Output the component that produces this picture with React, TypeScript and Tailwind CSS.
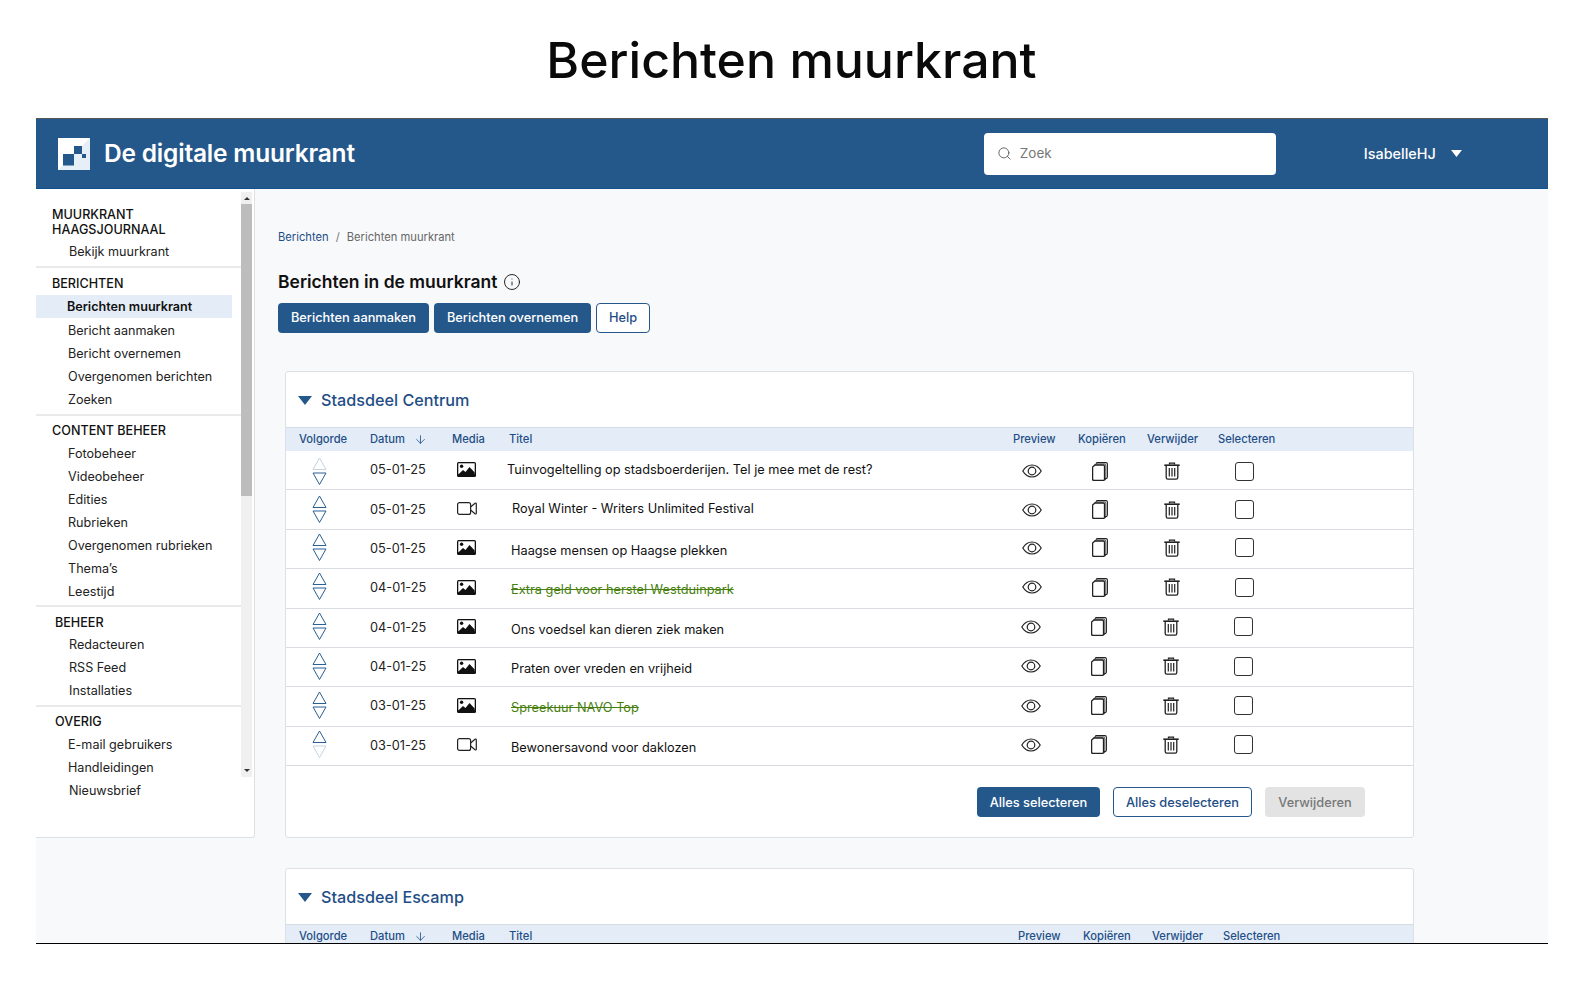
import { Search, ArrowDown, Info } from "lucide-react";

type Row = {
  date: string;
  title: string;
  media: "image" | "video";
  titleClass: string;
  arrowClass: string;
  iconClass: string;
  removed?: boolean;
  upFaded?: boolean;
  downFaded?: boolean;
};

const rows: Row[] = [
  { date: "05-01-25", title: "Tuinvogeltelling op stadsboerderijen. Tel je mee met de rest?", media: "image", titleClass: "pb-[2px]", arrowClass: "pt-[2px]", iconClass: "pt-[2px]", upFaded: true },
  { date: "05-01-25", title: "Royal Winter - Writers Unlimited Festival", media: "video", titleClass: "pl-[5px] pb-[3px]", arrowClass: "", iconClass: "" },
  { date: "05-01-25", title: "Haagse mensen op Haagse plekken", media: "image", titleClass: "pl-[4px] pt-[3px]", arrowClass: "pb-[3px]", iconClass: "pb-[2px]" },
  { date: "04-01-25", title: "Extra geld voor herstel Westduinpark", media: "image", titleClass: "pl-[4px] pt-[3px]", arrowClass: "pb-[3px]", iconClass: "pb-[2px]", removed: true },
  { date: "04-01-25", title: "Ons voedsel kan dieren ziek maken", media: "image", titleClass: "pl-[4px] pt-[3px]", arrowClass: "pb-[2px]", iconClass: "pb-[2px] -ml-[1px]" },
  { date: "04-01-25", title: "Praten over vreden en vrijheid", media: "image", titleClass: "pl-[4px] pt-[3px]", arrowClass: "pb-[2px]", iconClass: "pb-[2px] -ml-[1px]" },
  { date: "03-01-25", title: "Spreekuur NAVO Top", media: "image", titleClass: "pl-[4px] pt-[3px]", arrowClass: "pb-[2px]", iconClass: "pb-[2px] -ml-[1px]", removed: true },
  { date: "03-01-25", title: "Bewonersavond voor daklozen", media: "video", titleClass: "pl-[4px] pt-[3px]", arrowClass: "pb-[2px]", iconClass: "pb-[2px] -ml-[1px]", downFaded: true },
];

const gridCols = "grid grid-cols-[70px_83px_55px_506px_65px_69px_71px_1fr]";

function Logo() {
  return (
    <svg width="32" height="32" viewBox="0 0 32 32">
      <rect width="32" height="32" fill="#fff" />
      <path d="M32 32H0L32 0z" fill="#dce8f5" opacity="0.7" />
      <rect x="5" y="16" width="11" height="11.5" fill="#25588a" />
      <rect x="16" y="8" width="8" height="8" fill="#25588a" />
      <rect x="24" y="16" width="4" height="4" fill="#25588a" />
    </svg>
  );
}

function Triangle({ className }: { className: string }) {
  return (
    <svg className={className} viewBox="0 0 14 9">
      <path d="M0 0h14L7 9z" fill="currentColor" />
    </svg>
  );
}

function OrderArrows({ upFaded, downFaded }: { upFaded?: boolean; downFaded?: boolean }) {
  return (
    <svg width="15" height="29" viewBox="0 0 15 29" fill="none" strokeWidth="1">
      <path d="M7.5 1 1 12.5h13z" stroke={upFaded ? "#c5d3e2" : "#2b5f94"} />
      <path d="M1 16h13L7.5 27.5z" stroke={downFaded ? "#c5d3e2" : "#2b5f94"} />
    </svg>
  );
}

function ImageIcon() {
  return (
    <svg width="19" height="15" viewBox="0 0 19 15">
      <rect x="0" y="0" width="19" height="15" rx="1.5" fill="#111" />
      <rect x="1.3" y="1.3" width="16.4" height="11" fill="#fff" />
      <circle cx="4.6" cy="4.2" r="1.7" fill="#111" />
      <path d="M1.3 12.5 6 8l2.5 2 4-5 5.2 5.5V13H1.3z" fill="#111" />
    </svg>
  );
}

function VideoIcon() {
  return (
    <svg width="20" height="13" viewBox="0 0 20 13" fill="none" stroke="#222" strokeWidth="1.2">
      <rect x="0.6" y="0.6" width="13" height="11.8" rx="2" />
      <path d="M13.6 5 18 1.2c.6-.4 1.3-.2 1.3.6v9.4c0 .8-.7 1-1.3.6L13.6 8" />
    </svg>
  );
}

function EyeIcon() {
  return (
    <svg width="20" height="14" viewBox="0 0 20 14" fill="none" stroke="#222" strokeWidth="1.2">
      <path d="M.8 7C3.2 3 6.2 1 10 1s6.8 2 9.2 6c-2.4 4-5.4 6-9.2 6S3.2 11 .8 7z" />
      <circle cx="10" cy="7" r="3.8" />
    </svg>
  );
}

function CopyIcon() {
  return (
    <svg width="16" height="19" viewBox="0 0 16 19" fill="none" stroke="#222" strokeWidth="1.1">
      <path d="M4 1.6 5 .6h9c.8 0 1.4.6 1.4 1.4v13c0 1-.6 1.6-1.4 1.6h-1.4" />
      <path d="M2.6 3.2 4 2h8.4c.8 0 1.4.6 1.4 1.4v13c0 .9-.6 1.5-1.4 1.5" strokeOpacity="0.7" />
      <path d="M.6 5 3 3h8.2c.7 0 1.3.6 1.3 1.3v12.9c0 .7-.6 1.2-1.3 1.2H2c-.8 0-1.4-.6-1.4-1.3z" strokeWidth="1.3" />
    </svg>
  );
}

function TrashIcon() {
  return (
    <svg width="16" height="18" viewBox="0 0 16 18" fill="none" stroke="#222">
      <path d="M.3 3.2h15.4" strokeWidth="1.6" />
      <path d="M5.5 2.6V1.2h5v1.4" strokeWidth="1.3" />
      <path d="M2.2 4v11.4c0 1 .7 1.8 1.7 1.8h8.2c1 0 1.7-.8 1.7-1.8V4" strokeWidth="1.3" />
      <path d="M5.3 6v8.6M8 6v8.6M10.7 6v8.6" strokeWidth="1.2" />
    </svg>
  );
}

function TableHeader({ wide }: { wide?: boolean }) {
  return (
    <div className={`${gridCols} h-[24px] shrink-0 items-center border-t border-[#d5dce3] bg-[#e4edf7] pl-[13px] text-[11.2px] font-medium text-[#1f4e86]`}>
      <span>Volgorde</span>
      <span className="flex items-center pl-[1px]">
        Datum
        <ArrowDown size={13} strokeWidth={1.5} className="ml-[9px]" />
      </span>
      <span>Media</span>
      <span className="pl-[2px]">Titel</span>
      <span className={wide ? "pl-[5px]" : ""}>Preview</span>
      <span className={wide ? "pl-[5px]" : ""}>Kopiëren</span>
      <span className={wide ? "pl-[5px]" : ""}>Verwijder</span>
      <span className={wide ? "pl-[5px]" : ""}>Selecteren</span>
    </div>
  );
}

function TableRow({ row }: { row: Row }) {
  return (
    <div className={`${gridCols} h-[39.4px] items-center border-b-[1.5px] border-[#d9dde2] pl-[13px] text-[12.75px] text-[#111]`}>
      <div className={`flex pl-[13px] ${row.arrowClass}`}>
        <OrderArrows upFaded={row.upFaded} downFaded={row.downFaded} />
      </div>
      <span className="pb-[1px] pl-[1px] text-[#222]">{row.date}</span>
      <div className="flex pb-[2px] pl-[5px]">{row.media === "image" ? <ImageIcon /> : <VideoIcon />}</div>
      <span className={`${row.titleClass} ${row.removed ? "text-[#47800f] line-through" : ""}`}>{row.title}</span>
      <div className={`flex pl-[9px] ${row.iconClass}`}>
        <EyeIcon />
      </div>
      <div className={`flex pl-[14px] ${row.iconClass}`}>
        <CopyIcon />
      </div>
      <div className={`flex pl-[17px] ${row.iconClass}`}>
        <TrashIcon />
      </div>
      <div className={`flex pl-[17px] ${row.iconClass}`}>
        <span className="h-[19px] w-[19px] rounded-[3px] border-[1.5px] border-[#333]" />
      </div>
    </div>
  );
}

function CardTitle({ title }: { title: string }) {
  return (
    <div className="flex h-[55px] shrink-0 items-center gap-[9px] pt-[2px] pl-[12px]">
      <Triangle className="h-[9px] w-[14px] text-[#25588a]" />
      <span className="text-[16.2px] font-medium text-[#1f4e86]">{title}</span>
    </div>
  );
}

function SideHead({ children, className = "" }: { children: React.ReactNode; className?: string }) {
  return <div className={`text-[12.6px] leading-[15px] font-medium text-[#111] ${className}`}>{children}</div>;
}

function SideItem({ children, className = "" }: { children: React.ReactNode; className?: string }) {
  return <div className={`flex h-[23px] items-center pt-[2px] text-[12.6px] text-[#222] ${className}`}>{children}</div>;
}

function Sidebar() {
  return (
    <aside className="flex h-[649px] w-[219px] shrink-0 rounded-br-[3px] border-r border-b border-[#dde1e5] bg-white">
      <nav className="flex w-[205px] flex-col pt-[18px]">
        <div className="border-b-2 border-[#e8eaec] pb-[3px]">
          <SideHead className="pl-[16px]">
            MUURKRANT
            <br />
            HAAGSJOURNAAL
          </SideHead>
          <SideItem className="mt-[3px] pl-[33px]">Bekijk muurkrant</SideItem>
        </div>
        <div className="border-b-2 border-[#e8eaec] pt-[8px] pb-[3px]">
          <SideHead className="pl-[16px]">BERICHTEN</SideHead>
          <div className="mt-[4px] flex h-[23px] w-[196px] items-center bg-[#e4edf7] pt-[2px] pl-[31px] text-[12.6px] font-semibold text-[#111]">
            Berichten muurkrant
          </div>
          <SideItem className="mt-[1px] pl-[32px]">Bericht aanmaken</SideItem>
          <SideItem className="pl-[32px]">Bericht overnemen</SideItem>
          <SideItem className="pl-[32px]">Overgenomen berichten</SideItem>
          <SideItem className="pl-[32px]">Zoeken</SideItem>
        </div>
        <div className="border-b-2 border-[#e8eaec] pt-[7px] pb-[2px]">
          <SideHead className="pb-[4px] pl-[16px]">CONTENT BEHEER</SideHead>
          {["Fotobeheer", "Videobeheer", "Edities", "Rubrieken", "Overgenomen rubrieken", "Thema’s", "Leestijd"].map((item) => (
            <SideItem key={item} className="pl-[32px]">
              {item}
            </SideItem>
          ))}
        </div>
        <div className="border-b-2 border-[#e8eaec] pt-[8px] pb-[3px]">
          <SideHead className="pb-[3px] pl-[19px]">BEHEER</SideHead>
          <SideItem className="pl-[33px]">Redacteuren</SideItem>
          <SideItem className="pl-[33px]">RSS Feed</SideItem>
          <SideItem className="pl-[33px]">Installaties</SideItem>
        </div>
        <div className="pt-[7px]">
          <SideHead className="pb-[4px] pl-[19px]">OVERIG</SideHead>
          <SideItem className="pl-[32px]">E-mail gebruikers</SideItem>
          <SideItem className="pl-[32px]">Handleidingen</SideItem>
          <SideItem className="pl-[33px]">Nieuwsbrief</SideItem>
        </div>
      </nav>
      <div className="mt-[3px] flex h-[585px] w-[11px] flex-col items-center bg-[#f0f0f0]">
        <svg className="mt-[5px] mb-[4px] shrink-0" width="6" height="3" viewBox="0 0 6 3">
          <path d="M3 0 6 3H0z" fill="#333" />
        </svg>
        <div className="h-[292px] w-full bg-[#bdbdbd]" />
        <svg className="mt-auto mb-[5px]" width="6" height="3" viewBox="0 0 6 3">
          <path d="M0 0h6L3 3z" fill="#333" />
        </svg>
      </div>
    </aside>
  );
}

export default function App() {
  return (
    <div className="h-[981px] overflow-hidden bg-white font-['Inter',sans-serif]">
      <h1 className="flex h-[118px] items-center justify-center pt-[3px] text-[50px] font-medium text-[#0a0a0a]">Berichten muurkrant</h1>

      <div className="mx-[36px] flex h-[826px] w-[1512px] flex-col overflow-hidden border-b border-black bg-[#f8f9fb]">
        <header className="flex h-[71px] shrink-0 items-center border-t border-[#555] border-b border-b-[#10508f] bg-[#25588a] text-white">
          <div className="ml-[22px]">
            <Logo />
          </div>
          <span className="ml-[14px] text-[24.5px] font-semibold tracking-[-0.2px]">De digitale muurkrant</span>
          <div className="ml-[629px] flex h-[42px] w-[292px] items-center rounded-[4px] bg-white pl-[13px] text-[13.5px] text-[#777]">
            <Search size={15} strokeWidth={1.4} className="text-[#555]" />
            <span className="ml-[8px]">Zoek</span>
          </div>
          <span className="ml-[88px] text-[14.4px] font-medium">IsabelleHJ</span>
          <Triangle className="ml-[15px] h-[7px] w-[11px] text-white" />
        </header>

        <div className="flex min-h-0 flex-1">
          <Sidebar />
          <main className="min-w-0 flex-1 pl-[23px]">
            <div className="flex h-[55px] items-end text-[11.2px] leading-[14px]">
              <span className="text-[#1f4e86]">Berichten</span>
              <span className="mx-[7px] text-[#777]">/</span>
              <span className="text-[#666]">Berichten muurkrant</span>
            </div>
            <div className="mt-[26px] flex h-[24px] items-center gap-[6px]">
              <h2 className="text-[17.5px] font-semibold text-[#111]">Berichten in de muurkrant</h2>
              <Info size={18} strokeWidth={1.2} className="text-[#111]" />
            </div>
            <div className="mt-[9px] flex gap-[5px] text-[12.8px] font-medium">
              <button className="h-[30px] w-[151px] rounded-[4px] bg-[#25588a] text-white">Berichten aanmaken</button>
              <button className="h-[30px] w-[157px] rounded-[4px] bg-[#25588a] text-white">Berichten overnemen</button>
              <button className="h-[30px] w-[54px] rounded-[4px] border border-[#25588a] bg-white text-[#1f4e86]">Help</button>
            </div>

            <section className="mt-[38px] ml-[7px] flex h-[467px] w-[1129px] flex-col rounded-[3px] border border-[#dde1e5] bg-white">
              <CardTitle title="Stadsdeel Centrum" />
              <TableHeader />
              {rows.map((row) => (
                <TableRow key={row.title} row={row} />
              ))}
              <div className="mt-[21px] flex justify-end gap-[13px] pr-[48px] text-[12.8px] font-medium">
                <button className="h-[30px] w-[123px] rounded-[4px] bg-[#25588a] text-white">Alles selecteren</button>
                <button className="h-[30px] w-[139px] rounded-[4px] border border-[#25588a] bg-white text-[#1f4e86]">Alles deselecteren</button>
                <button className="h-[30px] w-[100px] rounded-[4px] bg-[#e3e3e3] text-[#777]">Verwijderen</button>
              </div>
            </section>

            <section className="mt-[30px] ml-[7px] w-[1129px] rounded-[3px] border border-[#dde1e5] bg-white">
              <CardTitle title="Stadsdeel Escamp" />
              <TableHeader wide />
            </section>
          </main>
        </div>
      </div>
    </div>
  );
}
